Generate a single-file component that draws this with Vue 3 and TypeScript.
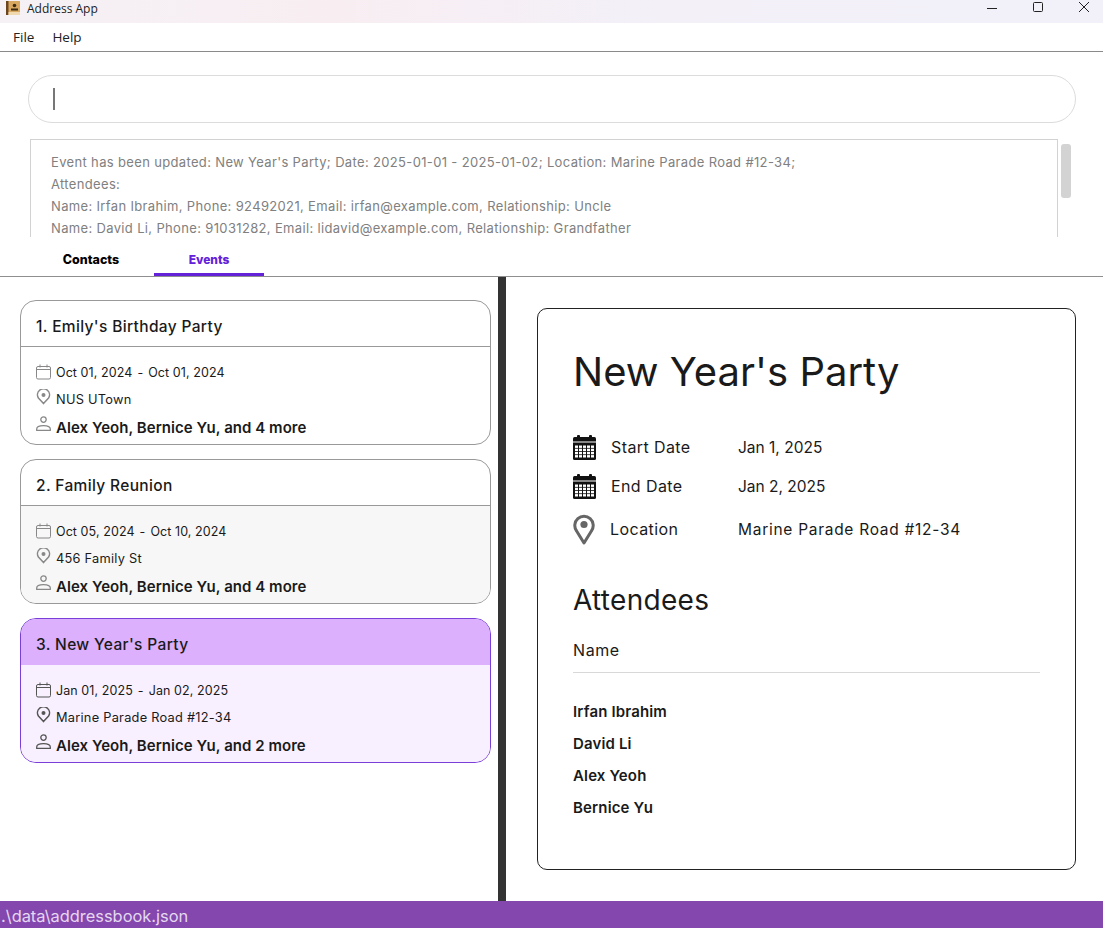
<script setup lang="ts">
interface EventCard { id: number; title: string; from: string; to: string; place: string; people: string; tone: string }
const events: EventCard[] = [
  { id: 1, title: "Emily's Birthday Party", from: 'Oct 01, 2024', to: 'Oct 01, 2024', place: 'NUS UTown', people: 'Alex Yeoh, Bernice Yu, and 4 more', tone: 'plain' },
  { id: 2, title: 'Family Reunion', from: 'Oct 05, 2024', to: 'Oct 10, 2024', place: '456 Family St', people: 'Alex Yeoh, Bernice Yu, and 4 more', tone: 'alt' },
  { id: 3, title: "New Year's Party", from: 'Jan 01, 2025', to: 'Jan 02, 2025', place: 'Marine Parade Road #12-34', people: 'Alex Yeoh, Bernice Yu, and 2 more', tone: 'selected' },
]
const attendees = ['Irfan Ibrahim', 'David Li', 'Alex Yeoh', 'Bernice Yu']
const log = [
  "Event has been updated: New Year's Party; Date: 2025-01-01 - 2025-01-02; Location: Marine Parade Road #12-34;",
  'Attendees:',
  'Name: Irfan Ibrahim, Phone: 92492021, Email: irfan@example.com, Relationship: Uncle',
  'Name: David Li, Phone: 91031282, Email: lidavid@example.com, Relationship: Grandfather',
]
const gridX = [2, 6, 10, 14, 18]
const gridY = [10.5, 13.7, 16.9, 20.1]
</script>

<template>
  <div class="app">
    <header class="titlebar">
      <svg class="appicon" width="15" height="15" viewBox="0 0 15 15">
        <rect x="0" y="0" width="14" height="14" fill="#d9a860" />
        <rect x="0" y="0" width="2.5" height="14" fill="#6b4520" />
        <rect x="2.5" y="11" width="11.5" height="3" fill="#f0d9ae" />
        <circle cx="8.5" cy="4.5" r="1.8" fill="#3d2a12" />
        <rect x="5" y="7.5" width="7" height="2" fill="#3d2a12" />
      </svg>
      <span class="apptitle">Address App</span>
      <div class="winbtns">
        <svg width="12" height="12" viewBox="0 0 12 12"><path d="M1 7.5h10" stroke="#222" fill="none" /></svg>
        <svg width="12" height="12" viewBox="0 0 12 12"><rect x="1.5" y="1.5" width="9" height="9" rx="1" stroke="#222" fill="none" /></svg>
        <svg width="12" height="12" viewBox="0 0 12 12"><path d="M1 1l10 10M11 1L1 11" stroke="#222" fill="none" /></svg>
      </div>
    </header>

    <nav class="menubar"><span>File</span><span>Help</span></nav>

    <section class="command">
      <div class="inputbox"><i class="caret"></i></div>
      <div class="resultrow">
        <div class="result"><p v-for="line in log" :key="line">{{ line }}</p></div>
        <div class="scrolltrack"><div class="thumb"></div></div>
      </div>
    </section>

    <div class="tabs">
      <span class="tab first">Contacts</span>
      <span class="tab active">Events</span>
    </div>

    <main class="split">
      <div class="list">
        <article v-for="e in events" :key="e.id" class="card" :class="e.tone">
          <h3 class="cardhead">{{ e.id }}. {{ e.title }}</h3>
          <div class="cardbody">
            <div class="line dates">
              <svg class="ico" width="16" height="16" viewBox="0 0 16 16" fill="none" stroke="currentColor">
                <rect x=".5" y="2.5" width="14" height="12.5" rx="1.5" />
                <path d="M.5 5.5h14M4 .5v3M11 .5v3" />
              </svg>
              <span>{{ e.from }}</span><span class="dash">-</span><span>{{ e.to }}</span>
            </div>
            <div class="line place">
              <svg class="ico" width="16" height="16" viewBox="0 0 16 16" fill="none" stroke="currentColor" stroke-width="1.5">
                <path d="M7.5 14.6 L2.4 9 A6 6 0 1 1 12.6 9 Z" stroke-linejoin="round" />
                <circle cx="7.5" cy="6" r="2" fill="currentColor" stroke="none" />
              </svg>
              <span>{{ e.place }}</span>
            </div>
            <div class="line people">
              <svg class="ico" width="16" height="16" viewBox="0 0 16 16" fill="none" stroke="currentColor" stroke-width="1.3">
                <circle cx="7.5" cy="3.6" r="2.7" />
                <path d="M.7 14.4v-1.5c0-2 2-3.2 6.8-3.2s6.8 1.2 6.8 3.2v1.5z" stroke-linejoin="round" />
              </svg>
              <span>{{ e.people }}</span>
            </div>
          </div>
        </article>
      </div>

      <div class="divider"></div>

      <div class="detailpane">
        <section class="detail">
          <h1>New Year's Party</h1>
          <div class="facts">
            <template v-for="(label, i) in ['Start Date', 'End Date']" :key="label">
              <div class="fact">
                <svg class="bigcal" width="23" height="25" viewBox="0 0 23 25">
                  <rect x="0" y="2" width="23" height="23" rx="1.5" fill="#111" />
                  <rect x="4" y="0" width="3" height="4" rx="1" fill="#111" />
                  <rect x="16" y="0" width="3" height="4" rx="1" fill="#111" />
                  <rect x="0" y="6.5" width="23" height="1" fill="#fff" />
                  <template v-for="x in gridX" :key="x">
                    <rect v-for="y in gridY" :key="y" :x="x" :y="y" width="3" height="2.4" fill="#fff" />
                  </template>
                </svg>
                <span class="label">{{ label }}</span>
                <span class="value">{{ i === 0 ? 'Jan 1, 2025' : 'Jan 2, 2025' }}</span>
              </div>
            </template>
            <div class="fact loc">
              <svg class="bigpin" width="22" height="33" viewBox="0 0 22 33">
                <path d="M11 30 L3.6 18 A9.2 9.2 0 1 1 18.4 18 Z" fill="none" stroke="#666" stroke-width="3" stroke-linejoin="round" />
                <circle cx="11" cy="11.5" r="3.6" fill="#666" />
              </svg>
              <span class="label">Location</span>
              <span class="value">Marine Parade Road #12-34</span>
            </div>
          </div>
          <h2>Attendees</h2>
          <div class="namehead">Name</div>
          <ul class="names"><li v-for="a in attendees" :key="a">{{ a }}</li></ul>
        </section>
      </div>
    </main>

    <footer class="status">.\data\addressbook.json</footer>
  </div>
</template>

<style>
html, body { margin: 0; background: #fff; }
</style>

<style scoped>
.app {
  width: 1103px; height: 928px; display: flex; flex-direction: column; overflow: hidden;
  font-family: Inter, "Open Sans", sans-serif; color: #1a1a1a; background: #fff;
}
.titlebar {
  height: 23px; flex: none; display: flex; align-items: center; padding-left: 6px; box-sizing: border-box;
  background: linear-gradient(90deg, #f5f1f5 0%, #f8eef2 30%, #f3f0f8 60%, #f2f0f8 100%);
}
.appicon { margin-top: -7px; }
.apptitle { font: 12px "Open Sans", sans-serif; margin: -6px 0 0 6px; color: #222; }
.winbtns { margin-left: auto; display: flex; gap: 34px; padding-right: 13px; margin-top: -9px; }
.menubar {
  height: 28px; flex: none; box-sizing: content-box; border-bottom: 1px solid #8a8a8a;
  display: flex; align-items: center; gap: 18px; padding-left: 13px;
  font: 13.5px "Open Sans", sans-serif; color: #222;
}
.command { height: 185px; flex: none; box-sizing: border-box; padding: 23px 27px 0 28px; overflow: hidden; }
.inputbox {
  height: 48px; box-sizing: border-box; border: 1px solid #dcdcdc; border-radius: 24px;
  display: flex; align-items: center; padding-left: 24px;
}
.caret { width: 2px; height: 22px; background: #777; }
.resultrow { display: flex; margin-top: 16px; padding-left: 2px; }
.result {
  width: 1028px; height: 98px; box-sizing: border-box; border: 1px solid #d2d2d2; border-bottom: 0;
  padding: 11px 20px 0; overflow: hidden; font-size: 13px; color: #808080; letter-spacing: .345px;
}
.result p { margin: 0; height: 22px; line-height: 22px; white-space: nowrap; }
.scrolltrack { padding: 5px 0 0 3px; }
.thumb { width: 10px; height: 54px; border-radius: 3px; background: #d3d3d3; }
.tabs {
  height: 39px; flex: none; box-sizing: content-box; border-bottom: 1px solid #8f8f8f;
  display: flex; padding-left: 44px;
}
.tab {
  width: 110px; height: 39px; box-sizing: border-box; text-align: center; line-height: 45px;
  font-size: 12px; font-weight: 800; color: #000;
}
.tab.first { width: 94px; margin-right: 16px; font-size: 12.5px; }
.tab.active { color: #6422d8; border-bottom: 3px solid #6422d8; }
.split { flex: 1; display: flex; min-height: 0; }
.list {
  width: 498px; flex: none; box-sizing: border-box; padding: 23px 7px 0 20px;
  display: flex; flex-direction: column; gap: 14px;
}
.card {
  height: 145px; box-sizing: border-box; border: 1px solid #999; border-radius: 16px; overflow: hidden;
  display: flex; flex-direction: column; color: #1a1a1a;
}
.cardhead {
  margin: 0; height: 46px; flex: none; box-sizing: border-box; border-bottom: 1px solid #999;
  padding: 0 15px; line-height: 51px; font-size: 15.5px; font-weight: 500; letter-spacing: .35px;
}
.cardbody { flex: 1; padding: 13px 15px 0; }
.card.alt .cardbody { background: #f7f7f7; }
.card.selected { border-color: #7a3fd8; }
.card.selected .cardhead { background: #dcb0fd; border-bottom: 0; height: 46px; }
.card.selected .cardbody { background: #f8f0fe; }
.line { display: flex; align-items: center; }
.ico { flex: none; color: #888; margin-right: 4px; }
.card.selected .ico { color: #555; }
.dates { height: 25px; font-size: 12.5px; letter-spacing: .08px; }
.dates .ico { margin-top: -2px; }
.dash { margin: 0 5px; }
.place { height: 28px; font-size: 12.8px; letter-spacing: .25px; }
.place .ico { margin-top: -5px; }
.people { height: 28px; font-size: 15px; font-weight: 600; letter-spacing: .04px; }
.people .ico { margin-top: -6px; }
.divider { width: 8px; flex: none; background: #333; }
.detailpane { flex: 1; box-sizing: border-box; padding: 31px 27px 31px 31px; }
.detail {
  height: 562px; box-sizing: border-box; border: 1px solid #222; border-radius: 10px; padding: 36px 35px 0;
}
h1 { margin: 0; font-size: 40px; line-height: 54px; font-weight: 400; color: #1a1a1a; }
.facts { margin-top: 29px; }
.fact { display: flex; align-items: center; height: 39px; }
.fact.loc { height: 47px; }
.bigcal { width: 23px; flex: none; margin-right: 15px; }
.bigpin { width: 22px; flex: none; margin-right: 15px; }
.label { width: 127px; font-size: 16px; letter-spacing: .4px; color: #1a1a1a; margin-top: -2px; }
.loc .label { width: 128px; }
.value { font-size: 15.5px; color: #1a1a1a; }
.loc .value { letter-spacing: .72px; }
h2 { margin: 29px 0 0; font-size: 28px; line-height: 36px; font-weight: 400; letter-spacing: .3px; }
.namehead {
  margin-top: 22px; width: 467px; height: 32px; border-bottom: 1px solid #d8d8d8; font-size: 16px; letter-spacing: .6px; line-height: 20px;
}
.names { list-style: none; margin: 23px 0 0; padding: 0; }
.names li { height: 32px; line-height: 32px; font-size: 15px; font-weight: 600; letter-spacing: .15px; }
.status {
  height: 27px; flex: none; background: #8447ad; color: #e6d8f0; font-size: 16.4px; line-height: 31px; padding-left: 1px;
}
</style>
